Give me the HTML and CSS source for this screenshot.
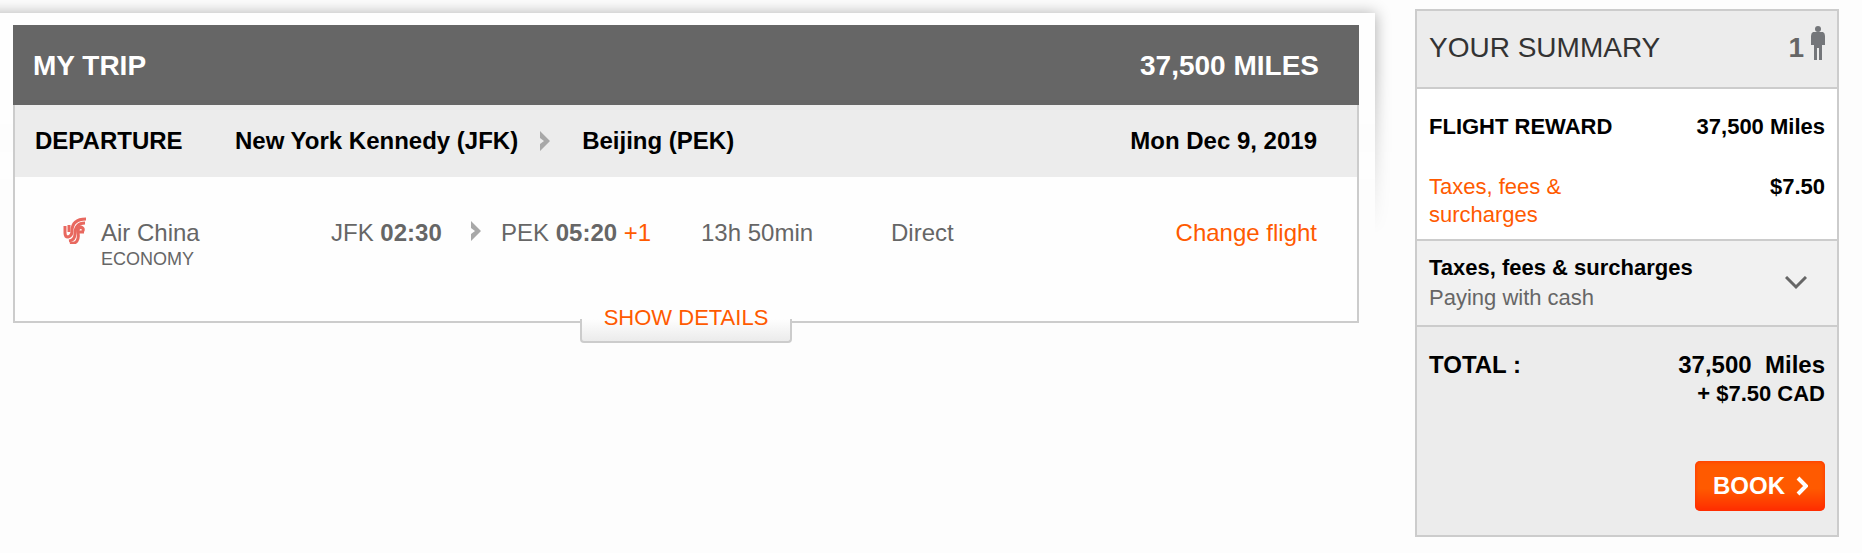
FILE: index.html
```html
<!DOCTYPE html>
<html lang="en">
<head>
    <meta charset="UTF-8">
    <meta name="viewport" content="width=device-width, initial-scale=1.0">
    <title>My Trip</title>
    <link rel="stylesheet" href="styles.css">
</head>
<body>
    <div class="page">
        <main class="trip-panel">
            <div class="panel-shadow"></div>
            <section class="trip">
                <header class="trip-header">
                    <h1>MY TRIP</h1>
                    <span>37,500 MILES</span>
                </header>
                <div class="route">
                    <span class="route-label">DEPARTURE</span>
                    <span>New York Kennedy (JFK)</span>
                    <svg class="arrow" viewBox="0 0 10 20"><path d="M0 0 L10 10 L0 20 V13 L4 10 L0 7 Z"/></svg>
                    <span>Beijing (PEK)</span>
                    <span class="route-date">Mon Dec 9, 2019</span>
                </div>
                <div class="flight">
                    <svg class="airline-logo" viewBox="0 0 24 27">
                        <path d="M2 9 V16 Q2 20 5 20 Q9 19 9 14 C9 6 14 2 23 2"/>
                        <path d="M6 8 V15 M6 24 Q12 23 12 17 C12 10 15 6 22 6"/>
                        <path d="M7 26 Q12 27 14 24 Q16 21 15 16 Q14 11 18 10 Q21 11 20 14 M16 15 H21"/>
                    </svg>
                    <div>
                        <div>Air China</div>
                        <div class="cabin">ECONOMY</div>
                    </div>
                    <div>JFK <b>02:30</b></div>
                    <svg class="arrow" viewBox="0 0 10 20"><path d="M0 0 L10 10 L0 20 V13 L4 10 L0 7 Z"/></svg>
                    <div>PEK <b>05:20</b> <span class="plus-day">+1</span></div>
                    <div>13h 50min</div>
                    <div>Direct</div>
                    <a class="change" href="#">Change flight</a>
                </div>
                <button type="button" class="show-details">SHOW DETAILS</button>
            </section>
        </main>

        <aside class="summary">
            <header class="summary-header">
                <h2>YOUR SUMMARY</h2>
                <span class="passengers">1
                    <svg viewBox="0 0 14 34">
                        <circle cx="7" cy="3" r="3"/>
                        <path d="M2 6 H12 Q14 7 14 10 V19 H11 V34 H8 V22 H6 V34 H3 V19 H0 V10 Q0 7 2 6 Z"/>
                    </svg>
                </span>
            </header>
            <div class="reward">
                <div class="line">
                    <b>FLIGHT REWARD</b>
                    <b>37,500 Miles</b>
                </div>
                <div class="line">
                    <a class="taxes-link" href="#">Taxes, fees &amp; surcharges</a>
                    <b>$7.50</b>
                </div>
            </div>
            <button type="button" class="payment">
                <span>
                    <b>Taxes, fees &amp; surcharges</b>
                    <span class="payment-method">Paying with cash</span>
                </span>
                <svg viewBox="0 0 22 14"><path d="M1 1 L11 11 L21 1"/></svg>
            </button>
            <div class="total">
                <div class="total-line">
                    <b>TOTAL :</b>
                    <b>37,500&nbsp; Miles</b>
                </div>
                <div class="total-cash">+ $7.50 CAD</div>
                <button type="button" class="book">BOOK
                    <svg viewBox="0 0 12 20"><path d="M2 2 L10 10 L2 18"/></svg>
                </button>
            </div>
        </aside>
    </div>
</body>
</html>
```
FILE: styles.css
```css
* {
    box-sizing: border-box;
}
body {
    margin: 0;
    font-family: "Liberation Sans", Arial, sans-serif;
    font-size: 24px;
    line-height: 28px;
    color: #666;
    background-color: #fdfdfd;
}
h1, h2 {
    margin: 0;
    font-size: 28px;
}
a {
    color: #ff5a00;
    text-decoration: none;
}
button {
    font-family: inherit;
    border: none;
    cursor: pointer;
}
.page {
    display: flex;
    align-items: flex-start;
    gap: 40px;
    padding-right: 23px;
}

/* trip */
.trip-panel {
    position: relative;
    flex: 1;
    padding: 25px 16px 0 13px;
}
.panel-shadow {
    position: absolute;
    top: 0;
    left: 0;
    right: -20px;
    height: 234px;
    overflow: hidden;
    -webkit-mask-image: linear-gradient(#000 30%, transparent);
    mask-image: linear-gradient(#000 30%, transparent);
}
.panel-shadow::before {
    content: "";
    position: absolute;
    top: 13px;
    left: -20px;
    right: 20px;
    height: 300px;
    background-color: #fefefe;
    box-shadow: 1px 0 14px rgba(0, 0, 0, 0.3);
}
.trip {
    position: relative;
    background-color: #fefefe;
}
.trip-header {
    display: flex;
    justify-content: space-between;
    align-items: center;
    height: 80px;
    padding: 2px 40px 0 20px;
    font-size: 28px;
    font-weight: bold;
    color: white;
    background-color: #666;
}
.route {
    display: flex;
    align-items: center;
    height: 72px;
    padding: 0 40px 0 20px;
    border: solid #ccc;
    border-width: 0 2px;
    font-weight: bold;
    color: black;
    background-color: #ececec;
}
.route-label {
    width: 200px;
}
.route .arrow {
    margin: 0 32px 0 22px;
}
.route-date {
    margin-left: auto;
}
.arrow {
    width: 10px;
    height: 20px;
    fill: #a8a8a8;
}
.flight {
    display: grid;
    grid-template-columns: 40px 230fr 140fr 30fr 200fr 190fr 200fr 226fr;
    height: 146px;
    padding: 42px 40px 0 46px;
    border: 2px solid #ccc;
    border-top: none;
}
.flight .arrow {
    margin-top: 2px;
}
.airline-logo {
    width: 24px;
    height: 27px;
    margin-left: 2px;
    margin-top: -2px;
    fill: none;
    stroke: #e8685f;
    stroke-width: 3;
}
.cabin {
    font-size: 18px;
    line-height: 24px;
}
.plus-day {
    color: #ff5a00;
}
.change {
    text-align: right;
}
.show-details {
    position: absolute;
    left: 50%;
    bottom: -20px;
    width: 212px;
    height: 44px;
    padding: 0 0 6px;
    transform: translateX(-50%);
    isolation: isolate;
    font-size: 22px;
    color: #ff5a00;
    background-color: #fefefe;
    border-radius: 0 0 4px 4px;
}
.show-details::before {
    content: "";
    position: absolute;
    left: 0;
    right: 0;
    bottom: 0;
    z-index: -1;
    height: 22px;
    border: 2px solid #ccc;
    border-top: none;
    border-radius: 0 0 4px 4px;
    background: linear-gradient(#fefefe, #ebebeb);
}

/* summary */
.summary {
    width: 424px;
    margin-top: 9px;
    border: 2px solid #ccc;
    font-size: 22px;
    color: black;
    background-color: #ececec;
}
.summary-header {
    display: flex;
    justify-content: space-between;
    height: 78px;
    padding: 23px 12px 0;
    border-bottom: 2px solid #ccc;
    font-size: 28px;
}
.summary-header h2 {
    font-weight: normal;
    color: #333;
}
.passengers {
    display: flex;
    gap: 7px;
    font-weight: bold;
    color: #666;
}
.passengers svg {
    width: 14px;
    height: 34px;
    margin-top: -8px;
    fill: #74767a;
}
.reward {
    padding: 24px 12px 10px;
    border-bottom: 2px solid #ccc;
    background-color: white;
}
.line {
    display: flex;
    justify-content: space-between;
}
.line + .line {
    margin-top: 32px;
}
.taxes-link {
    width: 180px;
}
.payment {
    display: flex;
    justify-content: space-between;
    align-items: center;
    width: 100%;
    height: 86px;
    padding: 0 30px 0 12px;
    border-bottom: 2px solid #ccc;
    font-size: 22px;
    line-height: 30px;
    text-align: left;
    color: black;
    background-color: #f1f1f1;
}
.payment b, .payment-method {
    display: block;
}
.payment-method {
    color: #666;
}
.payment svg {
    width: 22px;
    height: 14px;
    fill: none;
    stroke: #666;
    stroke-width: 3;
}
.total {
    display: flex;
    flex-direction: column;
    padding: 24px 12px;
}
.total-line {
    display: flex;
    justify-content: space-between;
    font-size: 24px;
}
.total-cash {
    line-height: 30px;
    font-weight: bold;
    text-align: right;
}
.book {
    display: flex;
    align-items: center;
    align-self: flex-end;
    gap: 11px;
    width: 130px;
    height: 50px;
    margin-top: 52px;
    padding: 0 0 0 18px;
    border-radius: 5px;
    font-size: 24px;
    font-weight: bold;
    color: white;
    background: linear-gradient(#ff5a00 55%, #ff2d00);
    box-shadow: inset 0 0 4px #ff2d00;
}
.book svg {
    width: 12px;
    height: 20px;
    fill: none;
    stroke: white;
    stroke-width: 4;
}
```
